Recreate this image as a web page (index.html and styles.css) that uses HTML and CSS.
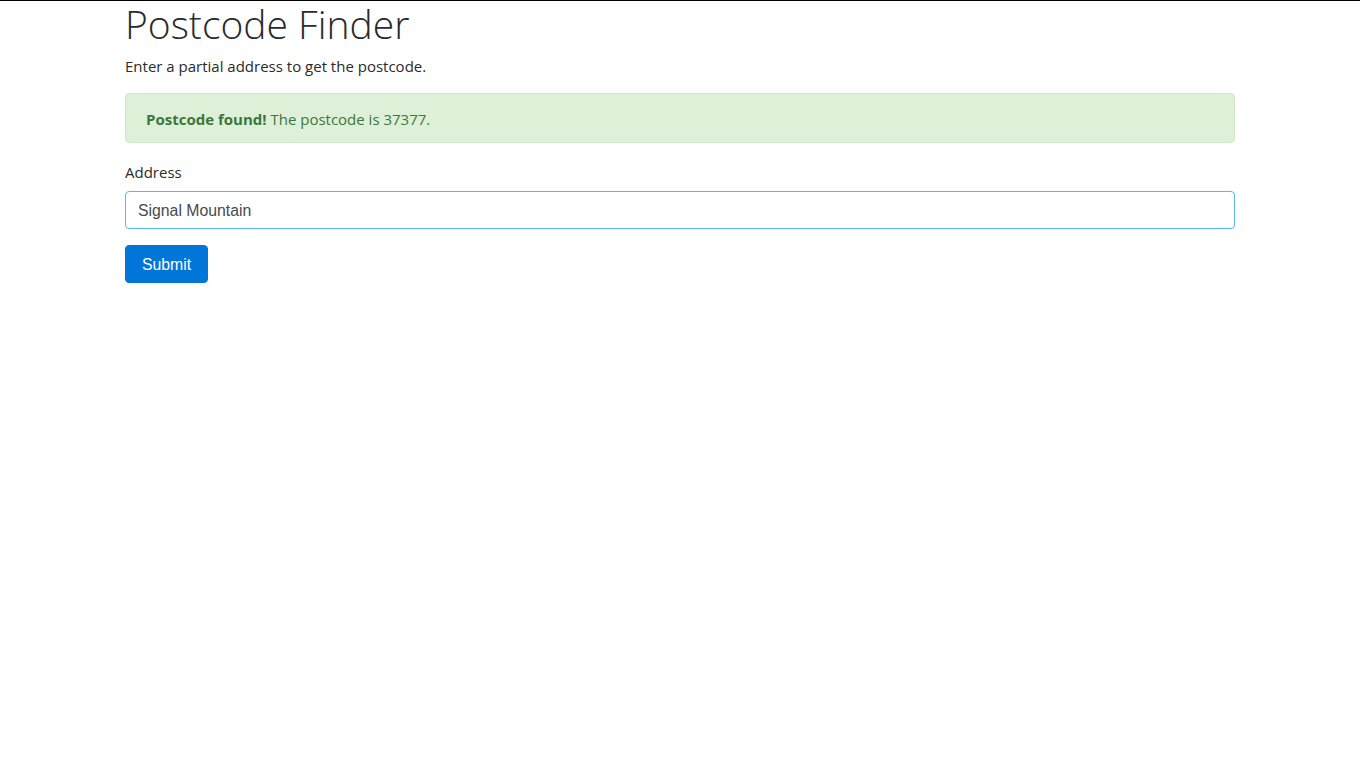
FILE: index.html
```html
<!DOCTYPE html>
<html lang="en">
<head>
    <meta charset="UTF-8">
    <title>Postcode Finder</title>
    <link rel="stylesheet" href="styles.css">
</head>
<body>

<div class="container">
    <h1 class="title">Postcode Finder</h1>
    <p class="lead-text">Enter a partial address to get the postcode.</p>

    <div class="alert alert-success">
        <strong>Postcode found!</strong> The postcode is 37377.
    </div>

    <form class="address-form" onsubmit="return false">
        <div class="form-group">
            <label class="form-label" for="address">Address</label>
            <input class="form-control" id="address" type="text" value="Signal Mountain">
        </div>
        <button class="btn-primary" type="submit">Submit</button>
    </form>
</div>

</body>
</html>
```

FILE: styles.css
```css
* {
    box-sizing: border-box;
}

body {
    margin: 0;
    border-top: 1px solid #000;
    font-family: "Open Sans", "Noto Sans", sans-serif;
    font-size: 15px;
    line-height: 24px;
    color: #292b2c;
    background: #fff;
}

.container {
    max-width: 1140px;
    margin: 0 auto;
    padding: 0 15px;
}

.title {
    margin: 0 0 6px;
    font-size: 39px;
    font-weight: 300;
    line-height: 46px;
}

.lead-text {
    margin: 0 0 16px;
    padding-top: 1px;
    height: 24px;
}

.alert {
    padding: 13px 20px 11px;
    margin-bottom: 16px;
    border: 1px solid transparent;
    border-radius: 4px;
}

.alert-success {
    background: #dff0d8;
    border-color: #d0e9c6;
    color: #3c763d;
}

.alert-success strong {
    font-weight: 700;
}

.form-group {
    margin-bottom: 16px;
}

.form-label {
    display: inline-block;
    padding-top: 1px;
    height: 24px;
    margin-bottom: 8px;
}

.form-control {
    display: block;
    width: 100%;
    height: 38px;
    padding: 9px 12px 7px;
    font-family: "Liberation Sans", Arial, sans-serif;
    font-size: 15.8px;
    line-height: 20px;
    color: #464a4c;
    background: #fff;
    border: 1px solid #5cb3fd;
    border-radius: 4px;
    outline: none;
}

.btn-primary {
    height: 38px;
    padding: 9px 16px 7px;
    font-family: "Liberation Sans", Arial, sans-serif;
    font-size: 15.8px;
    line-height: 20px;
    color: #fff;
    background: #0275d8;
    border: 1px solid #0275d8;
    border-radius: 4px;
    cursor: pointer;
}
```
